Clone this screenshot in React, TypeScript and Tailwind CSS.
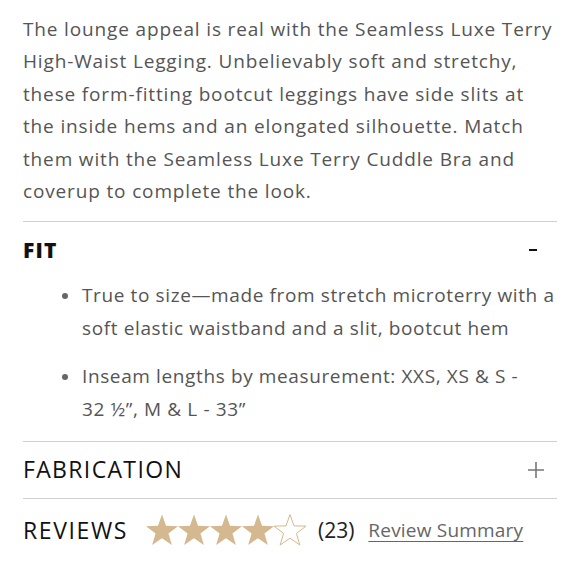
import React from "react";

const Star = ({ filled }: { filled: boolean }) => (
  <svg viewBox="0.8 0.9 22.4 22.4" className="w-[32px] h-[32px]">
    <path
      d="M12 1.3l2.8 7.9 8.4.2-6.7 5.1 2.4 8.1L12 17.8l-6.9 4.8 2.4-8.1-6.7-5.1 8.4-.2z"
      fill={filled ? "#d3b890" : "none"}
      stroke={filled ? "none" : "#d3b890"}
      strokeWidth={filled ? 0 : 0.7}
    />
  </svg>
);

export default function App() {
  const font = { fontFamily: "'Open Sans', Lato, sans-serif" };
  return (
    <div className="w-[580px] h-[580px] bg-white px-[23px] text-[#555]" style={font}>
      <p className="pt-[13px] pb-[14px] text-[19px] leading-[32.4px] tracking-[0.85px] whitespace-nowrap">
        The lounge appeal is real with the Seamless Luxe Terry<br />
        High-Waist Legging. Unbelievably soft and stretchy,<br />
        these form-fitting bootcut leggings have side slits at<br />
        the inside hems and an elongated silhouette. Match<br />
        them with the Seamless Luxe Terry Cuddle Bra and<br />
        coverup to complete the look.
      </p>

      <section className="border-t border-[#cfcfcf]">
        <div className="h-[56px] flex items-center justify-between">
          <h3 className="text-[21px] font-extrabold text-[#111] tracking-[1.2px]">FIT</h3>
          <span className="block w-[8px] h-[2px] bg-[#111] mr-[20px]" />
        </div>
        <ul className="pl-[59px] pt-[1px] pb-[15px] flex flex-col gap-[15px] text-[19px] leading-[33px] tracking-[0.62px] whitespace-nowrap">
          <li className="relative">
            <span className="absolute -left-[20px] top-[14px] w-[6px] h-[6px] rounded-full bg-[#666]" />
            True to size—made from stretch microterry with a<br />
            soft elastic waistband and a slit, bootcut hem
          </li>
          <li className="relative">
            <span className="absolute -left-[20px] top-[14px] w-[6px] h-[6px] rounded-full bg-[#666]" />
            Inseam lengths by measurement: XXS, XS &amp; S -<br />
            32 ½”, M &amp; L - 33”
          </li>
        </ul>
      </section>

      <section className="border-t border-[#cfcfcf]">
        <div className="h-[56px] flex items-center justify-between">
          <h3 className="text-[23px] text-[#111] tracking-[1.35px] -mt-[3px]">FABRICATION</h3>
          <svg viewBox="0 0 16 16" className="w-[16px] h-[16px] mr-[13px]">
            <path d="M8 0v16M0 8h16" stroke="#777" strokeWidth="1.6" />
          </svg>
        </div>
      </section>

      <section className="border-t border-[#cfcfcf]">
        <div className="h-[62px] flex items-center">
          <h3 className="text-[23px] text-[#111] tracking-[1.6px] mr-[18px]">REVIEWS</h3>
          <div className="flex items-center">
            {[1, 2, 3, 4, 5].map((i) => (
              <Star key={i} filled={i <= 4} />
            ))}
          </div>
          <span className="ml-[12px] text-[21px] text-[#222]">(23)</span>
          <a className="ml-[14px] text-[19px] text-[#666] tracking-[0.2px] underline underline-offset-[4px]">Review Summary</a>
        </div>
      </section>
    </div>
  );
}
